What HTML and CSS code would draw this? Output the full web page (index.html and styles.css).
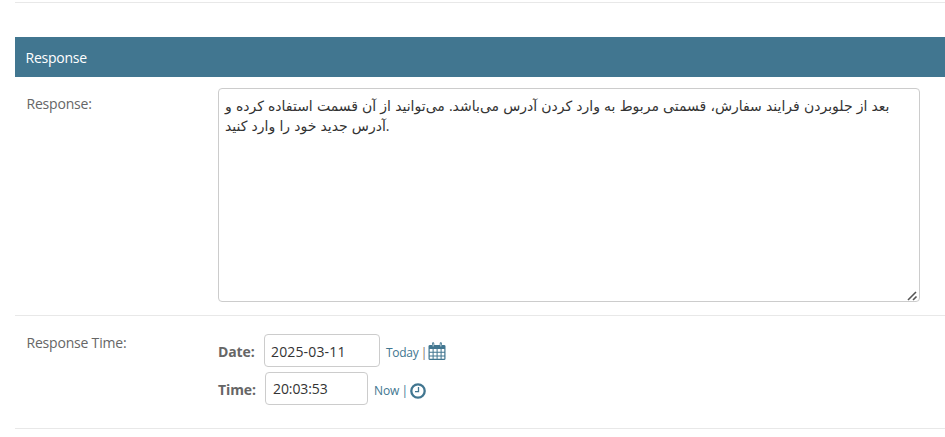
FILE: index.html
```html
<!DOCTYPE html>
<html lang="en">
<head>
<meta charset="utf-8">
<title>Response</title>
<link rel="stylesheet" href="styles.css">
</head>
<body>
<main class="module">
  <h2 class="module-title">Response</h2>
  <div class="form-row response-row">
    <label class="row-label" for="response">Response:</label>
    <div class="text-wrap">
      <textarea id="response" class="response-text" spellcheck="false">بعد از جلوبردن فرایند سفارش، قسمتی مربوط به وارد کردن آدرس می‌باشد. می‌توانید از آن قسمت استفاده کرده و
آدرس جدید خود را وارد کنید.</textarea>
      <svg class="grip" width="11" height="10" viewBox="0 0 11 10" stroke="#555" stroke-width="1.600">
        <path d="M1 9L9 1M6 9L9.500 5.500"/>
      </svg>
    </div>
  </div>
  <div class="form-row time-row">
    <div class="row-label">Response Time:</div>
    <div class="datetime">
      <div class="field date-field">
        <label for="date">Date:</label>
        <input id="date" type="text" value="2025-03-11">
        <span class="shortcuts"><a>Today</a><i>|</i></span>
        <svg class="calendar" width="18" height="19" viewBox="0 0 18 19">
          <path fill="#417690" fill-rule="evenodd" d="M2 3h2V1.5Q4 .3 5.1 .3T6.3 1.5V3h5.4V1.5Q11.7 .3 12.8 .3T14 1.5V3h2q1.5 0 1.5 1.3v12.4Q17.5 18 16 18H2Q.5 18 .5 16.700V4.300Q.5 3 2 3zM1.700 7v2.700h2.900V7zm3.900 0v2.700h3V7zm4 0v2.700h3V7zm4 0v2.700h2.700V7zM1.700 10.700v2.800h2.900v-2.800zm3.900 0v2.800h3v-2.800zm4 0v2.800h3v-2.800zm4 0v2.800h2.700v-2.800zM1.700 14.500v2.300h2.900v-2.300zm3.900 0v2.300h3v-2.300zm4 0v2.300h3v-2.300zm4 0v2.300h2.700v-2.300z"/>
          <path stroke="#fff" stroke-width=".7" d="M5.150 1.500v3M12.850 1.500v3"/>
        </svg>
      </div>
      <div class="field time-field">
        <label for="time">Time:</label>
        <input id="time" type="text" value="20:03:53">
        <span class="shortcuts"><a>Now</a><i>|</i></span>
        <svg class="clock" width="16" height="16" viewBox="0 0 16 16" fill="none" stroke="#417690">
          <circle cx="8" cy="8" r="6.700" stroke-width="2.300"/>
          <path stroke-width="1.300" d="M8.500 4v4.700H5"/>
        </svg>
      </div>
    </div>
  </div>
</main>
</body>
</html>
```
FILE: styles.css
```css
* { box-sizing: border-box; }

body {
  margin: 0;
  background: #fff;
  color: #666;
  font-family: "Open Sans", "Noto Sans", "DejaVu Sans", sans-serif;
  overflow: hidden;
}

.module {
  margin: 2px 0 0 15px;
  padding-top: 34px;
  border-top: 1px solid #e8e8e8;
}

.module-title {
  height: 40px;
  margin: 0;
  padding-left: 10.500px;
  background: #417690;
  color: #fff;
  font-size: 14px;
  font-weight: 400;
  letter-spacing: -.25px;
  line-height: 41px;
}

.form-row {
  display: flex;
  padding-left: 11.500px;
  border-bottom: 1px solid #e8e8e8;
}

.response-row { height: 239px; padding-top: 11px; }
.time-row { height: 113px; padding-top: 18px; }

.row-label {
  flex: 0 0 191.500px;
  font-size: 14px;
  font-weight: 400;
  letter-spacing: -.2px;
  line-height: 20px;
}

.response-row .row-label { padding-top: 6px; }
.time-row .row-label { margin-top: -1px; }

.text-wrap {
  position: relative;
  width: 702px;
  height: 214px;
}

.response-text {
  display: block;
  width: 100%;
  height: 100%;
  padding: 7px 6px;
  border: 1px solid #ccc;
  border-radius: 4px;
  outline: 0;
  background: #fff;
  color: #333;
  font-family: "Open Sans", "DejaVu Sans", sans-serif;
  font-size: 14px;
  line-height: 20px;
  word-spacing: .5px;
  direction: ltr;
  text-align: left;
  white-space: pre;
  overflow: hidden;
  resize: none;
}

.grip {
  position: absolute;
  right: 2px;
  bottom: 1px;
}

.field {
  display: flex;
  align-items: center;
  height: 33px;
  margin-bottom: 5px;
}

.field label {
  width: 46px;
  padding-top: 1px;
  font-size: 14px;
  font-weight: 700;
  letter-spacing: -.1px;
}

.time-field label { width: 47px; }

.field input {
  width: 116px;
  height: 33px;
  padding: 1px 7px 0 6px;
  border: 1px solid #ccc;
  border-radius: 4px;
  color: #333;
  font-family: inherit;
  font-size: 14px;
  letter-spacing: .15px;
}

.time-field input {
  width: 103px;
  padding: 0 7px;
  letter-spacing: -.1px;
}

.shortcuts {
  flex: none;
  display: flex;
  gap: 2.500px;
  width: 42px;
  margin-left: 6px;
  color: #666;
  font-size: 12px;
  letter-spacing: -.3px;
  line-height: 16px;
  padding-top: 4px;
}

.time-field .shortcuts { width: 36px; letter-spacing: -.15px; }
.shortcuts a { color: #417690; }
.shortcuts i { color: #7c6b65; font-style: normal; }
.time-field i { color: #417690; }
.calendar { margin-top: 2px; }
.clock { margin-top: 4px; }
```
